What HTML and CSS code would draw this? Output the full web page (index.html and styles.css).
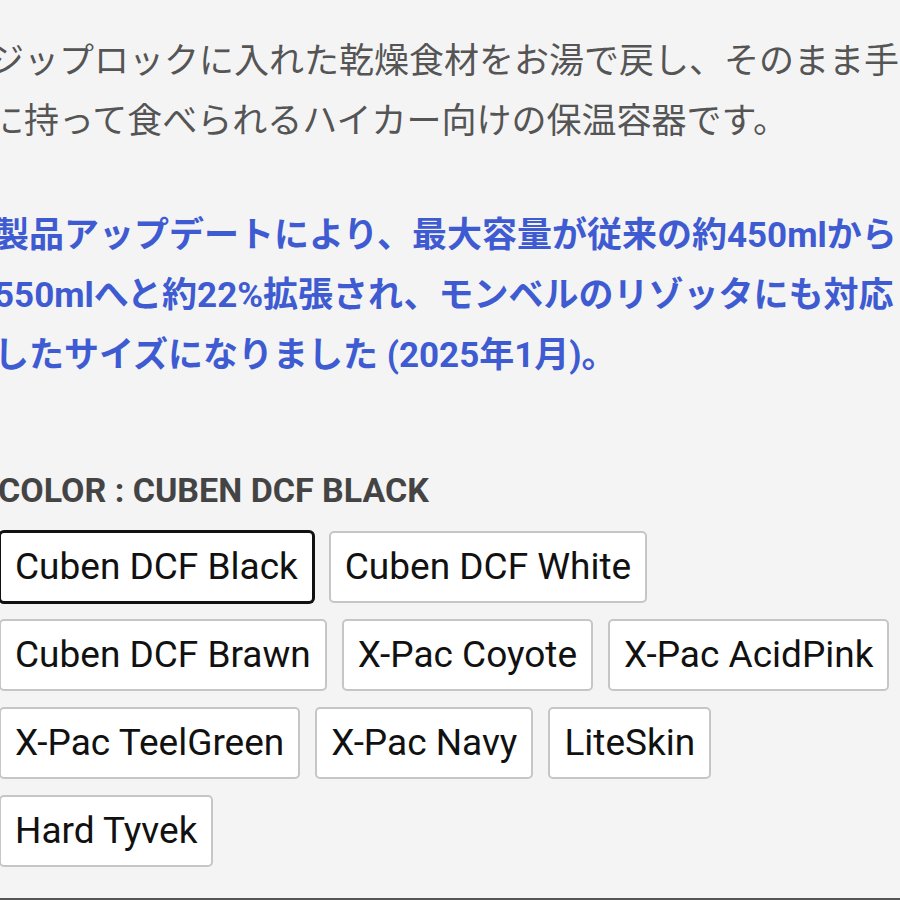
FILE: index.html
```html
<!DOCTYPE html>
<html lang="ja">
<head>
    <meta charset="UTF-8">
    <meta name="viewport" content="width=device-width, initial-scale=1.0">
    <title>保温容器</title>
    <link rel="stylesheet" href="styles.css">
</head>
<body>
  <div class="page">
    <p class="lead">ジップロックに入れた乾燥食材をお湯で戻し、そのまま手<br>に持って食べられるハイカー向けの保温容器です。</p>

    <p class="notice">製品アップデートにより、最大容量が従来の約450mlから<br>550mlへと約22%拡張され、モンベルのリゾッタにも対応<br>したサイズになりました (2025年1月)。</p>

    <div class="variant">
      <h3 class="variant-label">COLOR : CUBEN DCF BLACK</h3>
      <div class="swatches">
        <button class="swatch is-active">Cuben DCF Black</button>
        <button class="swatch">Cuben DCF White</button>
        <button class="swatch">Cuben DCF Brawn</button>
        <button class="swatch">X-Pac Coyote</button>
        <button class="swatch">X-Pac AcidPink</button>
        <button class="swatch">X-Pac TeelGreen</button>
        <button class="swatch">X-Pac Navy</button>
        <button class="swatch">LiteSkin</button>
        <button class="swatch">Hard Tyvek</button>
      </div>
    </div>
  </div>
</body>
</html>
```

FILE: styles.css
```css
html, body {
  margin: 0;
  padding: 0;
  background: #f4f4f4;
  overflow: hidden;
}

/* 本文エリア */
.page {
  box-sizing: border-box;
  height: 100vh;
  padding-top: 32px;
  border-bottom: 2px solid #555555;
  font-family: Roboto, "Noto Sans CJK JP", sans-serif;
}

.lead,
.notice {
  margin: 0 0 54px;
  font-size: 35px;
  line-height: 60px;
  white-space: nowrap;
}

.lead {
  margin-left: -11px;
  color: #555555;
}

.notice {
  margin-left: -6px;
  color: #3f5bd2;
  font-weight: bold;
}

/* カラー選択 */
.variant {
  margin-top: 84px;
}

.variant-label {
  margin: 0 0 21px -2px;
  font-size: 34px;
  line-height: 40px;
  font-weight: bold;
  color: #444444;
}

.swatches {
  display: flex;
  flex-wrap: wrap;
  gap: 16px 15px;
  margin-left: -1px;
}

.swatch {
  height: 72px;
  padding: 0 14px;
  border: 2px solid #c6c6c6;
  border-radius: 5px;
  background: #ffffff;
  font-family: Roboto, "Noto Sans", sans-serif;
  font-size: 37px;
  line-height: 40px;
  color: #111111;
  cursor: pointer;
}

.swatch.is-active {
  border-color: #111111;
  box-shadow: 0 0 0 1px #111111;
}
```
